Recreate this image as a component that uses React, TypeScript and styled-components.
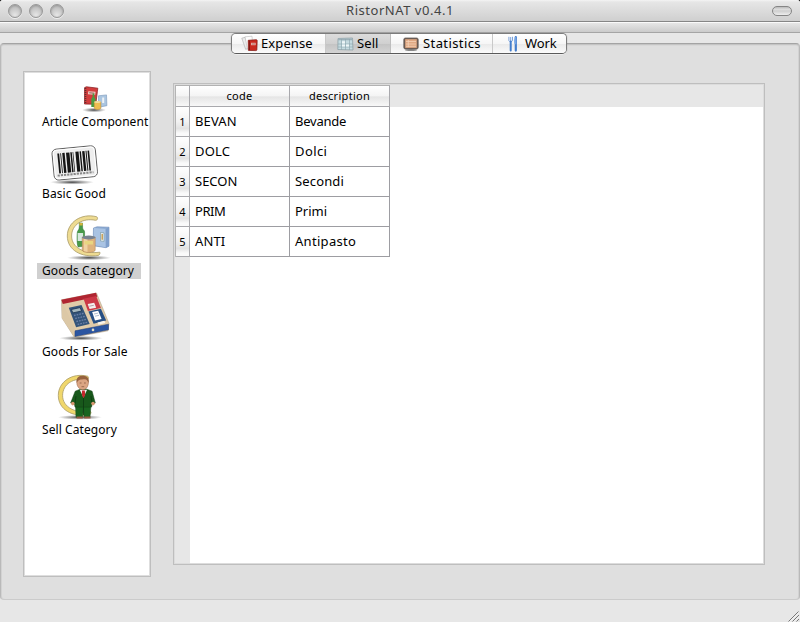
import React from "react";
import styled, { createGlobalStyle } from "styled-components";

const Global = createGlobalStyle`
  * { box-sizing: border-box; }
  html, body { margin: 0; padding: 0; background: #000; }
  body { overflow: hidden; font-family: "Noto Sans", "Open Sans", sans-serif; color: #000; }
`;

const Window = styled.div`
  width: 800px;
  height: 622px;
  display: flex;
  flex-direction: column;
  background: #e7e7e7;
  border-radius: 3px 3px 0 0;
  overflow: hidden;
`;

const TitleBar = styled.header`
  height: 22px;
  flex: none;
  display: grid;
  grid-template-columns: 100px 1fr 100px;
  align-items: center;
  background: linear-gradient(#f4f4f4 0, #e6e6e6 2px, #cfcfcf 21px);
  border-bottom: 1px solid #868686;
`;

const Lights = styled.div`
  display: flex;
  gap: 7px;
  padding-left: 8px;
`;

const Light = styled.span`
  width: 14px;
  height: 14px;
  border-radius: 50%;
  border: 1px solid #989898;
  background: radial-gradient(circle at 50% 85%, #e6e6e6 0, #cacaca 50%, #b4b4b4 100%);
  box-shadow: inset 0 1px 2px #999, 0 1px 0 #eee;
`;

const Title = styled.h1<{ $ls: number }>`
  margin: 0;
  text-align: center;
  font-size: 13px;
  line-height: 20px;
  font-weight: 400;
  color: #444;
  letter-spacing: ${(p) => p.$ls}px;
  padding-bottom: 1px;
`;

const Pill = styled.span`
  justify-self: end;
  width: 20px;
  height: 10px;
  margin-right: 8px;
  border: 1px solid #858585;
  border-radius: 5px;
  background: linear-gradient(#bbb, #ddd 30%, #cfcfcf 50%, #eee);
`;

const ToolStrip = styled.div`
  height: 11px;
  flex: none;
  border-top: 1px solid #fafafa;
  border-bottom: 1px solid #a5a5a5;
  background: linear-gradient(#e6e6e6, #cbcbcb);
`;

const Body = styled.main`
  height: 567px;
  flex: none;
  padding-top: 10px;
`;

const Pane = styled.section`
  height: 557px;
  display: flex;
  flex-direction: column;
  border: 1px solid #b9b9b9;
  border-top: 1px solid #a4a4a4;
  border-bottom: 1px solid #cbcbcb;
  border-radius: 4px;
  background: #dfdfdf;
  box-shadow: inset 0 1px 0 #c4c4c4, inset 0 2px 0 #d8d8d8, inset 1px 0 0 #d2d2d2, inset -1px 0 0 #d2d2d2;
`;

const TabBar = styled.nav`
  width: 336px;
  height: 21px;
  flex: none;
  margin: -11px 0 0 230px;
  display: grid;
  grid-template-columns: 94px 65px 102px 73px;
  border: 1px solid #7c7c7c;
  border-bottom-color: #5a5a5a;
  border-radius: 5px;
  overflow: hidden;
  box-shadow: 0 1px 0 #eee, 0 0 1px #777;
`;

const Tab = styled.button<{ $active?: boolean; $pad: number; $gap: number; $ls: number }>`
  border: 0;
  border-right: 1px solid ${(p) => (p.$active ? "#bdbdbd" : "#c9c9c9")};
  padding: 0 0 0 ${(p) => p.$pad}px;
  display: flex;
  align-items: center;
  gap: ${(p) => p.$gap}px;
  font-family: inherit;
  font-size: 13px;
  line-height: 19px;
  color: #000;
  white-space: nowrap;
  letter-spacing: ${(p) => p.$ls}px;
  background: ${(p) =>
    p.$active
      ? "linear-gradient(#dcdcdc, #d0d0d0 50%, #c3c3c3 51%, #d4d4d4)"
      : "linear-gradient(#fff, #f6f6f6 50%, #e9e9e9 51%, #fbfbfb)"};
  &:last-child { border-right: 0; }
  svg { flex: none; display: block; }
`;

const Columns = styled.div`
  display: flex;
  align-items: flex-start;
  gap: 22px;
  padding: 17px 0 0 22px;
`;

const Sidebar = styled.aside`
  width: 128px;
  height: 506px;
  border: 1px solid #bebebe;
  box-shadow: inset 0 0 0 1px #dedede;
  background: #fff;
  padding: 1px 1px 0 13px;
`;

const Item = styled.div`
  display: flex;
  flex-direction: column;
  align-items: flex-start;
  svg { display: block; }
`;

const ItemLabel = styled.span<{ $selected?: boolean; $ls: number }>`
  height: 16px;
  min-width: ${(p) => (p.$selected ? 104 : 0)}px;
  padding-left: 5px;
  font-size: 12px;
  line-height: 15px;
  white-space: nowrap;
  letter-spacing: ${(p) => p.$ls}px;
  background: ${(p) => (p.$selected ? "#d0d0d0" : "transparent")};
`;

const TableFrame = styled.div`
  width: 592px;
  height: 482px;
  margin-top: 12px;
  border: 1px solid #bebebe;
  box-shadow: inset 0 0 0 1px #dcdcdc;
  padding: 1px;
`;

const TableView = styled.div`
  height: 478px;
  background: linear-gradient(#e7e7e7, #e7e7e7) 0 0 / 100% 22px no-repeat,
    linear-gradient(#e7e7e7, #e7e7e7) 0 0 / 15px 100% no-repeat, #fff;
`;

const Table = styled.div`
  width: 215px;
  display: grid;
  grid-template-columns: 14px 100px 100px;
  grid-template-rows: 22px;
  grid-auto-rows: 30px;
  border-left: 1px solid #b4b4b4;
`;

const HeadCell = styled.div<{ $ls?: number }>`
  border-right: 1px solid #a9a9ad;
  border-bottom: 1px solid #a9a9ad;
  border-top: 1px solid #b2b2b2;
  background: linear-gradient(#fff, #f4f4f4 50%, #e5e5e5 54%, #f8f8f8);
  text-align: center;
  font-size: 11px;
  line-height: 20px;
  letter-spacing: ${(p) => p.$ls ?? 0}px;
`;

const RowHead = styled.div`
  border-right: 1px solid #a9a9ad;
  border-bottom: 1px solid #a9a9ad;
  background: linear-gradient(#fff, #f2f2f2 50%, #e2e2e2 74%, #fafafa 90%);
  text-align: center;
  font-size: 11px;
  line-height: 29px;
`;

const Cell = styled.div<{ $ls: number }>`
  border-right: 1px solid #9d9da2;
  border-bottom: 1px solid #9d9da2;
  background: #fff;
  padding-left: 5px;
  font-size: 13px;
  line-height: 28px;
  letter-spacing: ${(p) => p.$ls}px;
`;

const StatusBar = styled.footer`
  flex: 1;
  display: flex;
  justify-content: flex-end;
  align-items: flex-end;
  svg { display: block; }
`;

const ExpenseIcon = () => (
  <svg width="17" height="17" viewBox="0 0 17 17">
    <path d="M.8 3.2L4 2.3l4 10.5-3.3 1.6z" fill="#ececec" stroke="#aaa" strokeWidth=".6" />
    <path d="M4 1.8l7-.6 1 12-5.5 1z" fill="#fdfdfd" stroke="#bbb" strokeWidth=".6" />
    <path d="M7.2 5.3l8-.6c.6 0 1 .3 1 .9l-.3 9c0 .6-.4 1-1 1l-7.5-.2z" fill="#c9281e" stroke="#7c1814" strokeWidth=".7" />
    <path d="M8.3 5.5l.2 9.6" stroke="#7d1813" strokeWidth="1" />
    <rect x="10" y="7.8" width="4.6" height="2.4" fill="#f2c4bc" />
    <path d="M10.5 9h3.6" stroke="#8d3029" strokeWidth=".7" />
  </svg>
);

const SellIcon = () => (
  <svg width="17" height="14" viewBox="0 0 17 14">
    <path d="M1 1.5l14.5-.5L16 13 .8 12.5z" fill="#c5dbe0" stroke="#8fa2a8" strokeWidth=".8" />
    <path d="M1 1.5h14.8v1.8H1z" fill="#9db0b8" />
    <path d="M1 7h15M1 10h15M4.5 2v11M8.5 2v11M12.5 2v11" stroke="#8ba5ad" strokeWidth=".6" />
    <path d="M5 4.3h3v2.3H5zM9 7.5h3v2H9zM5 7.5h3v2H5z" fill="#eef6f7" />
  </svg>
);

const StatsIcon = () => (
  <svg width="16" height="14" viewBox="0 0 16 14">
    <ellipse cx="8" cy="13" rx="6" ry="1" fill="#888" />
    <rect x=".8" y="1" width="14.4" height="11" rx="1.5" fill="#6a5950" stroke="#6b625d" strokeWidth=".8" />
    <rect x="2.2" y="2.2" width="11.6" height="8.7" fill="#dfa883" />
    <path d="M3 4.5h10M3 7h10M3 9.3h10M5.3 3v7" stroke="#f4d2b6" strokeWidth=".8" />
  </svg>
);

const WorkIcon = () => (
  <svg width="10" height="16" viewBox="0 0 10 16">
    <path d="M.9.8v4c0 1 3.6 1 3.6 0v-4M2.7 1v4" fill="none" stroke="#7da4dc" strokeWidth="1" />
    <path d="M2.7 5.5v9" stroke="#437dcc" strokeWidth="2" strokeLinecap="round" />
    <path d="M7.8 1.2v13.4" stroke="#437dcc" strokeWidth="2.2" strokeLinecap="round" />
    <path d="M7.2 1c-1.3 2-1.2 5-.6 7l1.7.4V1z" fill="#75a5e5" />
  </svg>
);

const Shadow = ({ cx, cy, rx }: { cx: number; cy: number; rx: number }) => (
  <>
    <defs>
      <radialGradient id={`shade${cy}`}>
        <stop offset="0" stopColor="#222" stopOpacity=".85" />
        <stop offset="1" stopColor="#555" stopOpacity="0" />
      </radialGradient>
    </defs>
    <ellipse cx={cx} cy={cy} rx={rx} ry="2.4" fill={`url(#shade${cy})`} />
  </>
);

const Groceries = () => (
  <>
    <path d="M93.5 228l3.5-1.2 12 .4v19l-3 1.5-13-2z" fill="#8fadd4" stroke="#6f8dbb" strokeWidth=".6" />
    <path d="M94 228l11.7 1v18.3L93.6 245z" fill="#a9c3e3" />
    <path d="M105.7 229l3.2-1.8v18.7l-3 1.6z" fill="#7f9fcb" />
    <path d="M100.5 232.5l3.5.4v8.5l-3.5-.5z" fill="#e8edf2" stroke="#688" strokeWidth=".5" />
    <path d="M102.2 234v5.8" stroke="#c49a4b" strokeWidth="1.4" />
    <path d="M79.3 223h3.2l.1 5c.2 2 2 2 2 4v14l-6.5 1c-1.6-4-1.2-15-.4-16 1.5-1.7 1.7-3 1.6-8z" fill="#479a48" stroke="#2d6e31" strokeWidth=".5" />
    <path d="M79.3 223h3.3v2.5h-3.3z" fill="#d3b43d" />
    <path d="M77.6 233h5.5v8h-5.5z" fill="#d8e8de" />
    <path d="M82.2 237v13c0 3.3 13 3.3 13 0v-13z" fill="#dfb37c" stroke="#a77c54" strokeWidth=".5" />
    <path d="M84 239h3.5v13l-3.5-1z" fill="#f0d2a3" />
    <ellipse cx="88.7" cy="237.5" rx="6.7" ry="1.9" fill="#788290" />
    <path d="M84.5 241h8.5v3.5h-8.5z" fill="#e9d681" />
  </>
);

const ArticleArt = () => (
  <svg width="112" height="41" viewBox="37 73 112 41">
    <Shadow cx={94} cy={110} rx={12} />
    <path d="M84.6 87.6l1.8-.8 11.4 1.4-.4 3-1.6 13-11.3-.2z" fill="#d23c3c" stroke="#8d2427" strokeWidth=".8" />
    <path d="M85.5 88v16" stroke="#5d3030" strokeWidth="1.6" strokeDasharray="1 1" />
    <path d="M88.3 91.2l7.2.6-.3 3-7.2-.5z" fill="#f1d5cc" />
    <path d="M89.2 92.8l5.2.4" stroke="#8f4541" strokeWidth=".9" />
    <path d="M98.5 95.8l8-.9.4 10.8-8.4 1.6z" fill="#aac5e0" stroke="#7796b8" strokeWidth=".6" />
    <path d="M102.2 97.5h2v5.5h-2z" fill="#eef2f4" />
    <path d="M92.6 93.5h1.7v3.5l1.2 2v8h-4.2v-8l1.3-2z" fill="#4a9c42" />
    <path d="M94.2 102v6.2c1.5 1.7 5.4 1.7 6.7 0V102z" fill="#eebd50" stroke="#b68838" strokeWidth=".5" />
    <ellipse cx="97.5" cy="102" rx="3.3" ry="1.1" fill="#f3dd9c" />
  </svg>
);

const bars: [number, number][] = [
  [58.3, 1.8], [61.2, 0.8], [63.2, 2.4], [67, 3.4], [71.3, 1.5], [73.6, 0.7],
  [76.4, 3.2], [80.6, 1.4], [83.2, 2.4], [86.6, 1], [88.6, 1.6],
];

const BarcodeArt = () => (
  <svg width="112" height="56" viewBox="37 130 112 56">
    <Shadow cx={72} cy={182.2} rx={22} />
    <g transform="rotate(-5.5 74 163)">
      <rect x="53" y="147.5" width="43.5" height="31" rx="4.5" fill="#eee" stroke="#555" strokeWidth=".9" />
      <rect x="54.2" y="148.7" width="41" height="28.5" rx="3.5" fill="none" stroke="#fff" strokeWidth="1" />
      {bars.map(([x, w]) => (
        <rect key={x} x={x} y="152" width={w} height="20" fill="#151515" />
      ))}
      <path d="M56.5 174h36" stroke="#888" strokeWidth="2" strokeDasharray="2.2 1" />
    </g>
  </svg>
);

const Crescent = ({ dx, dy, fill }: { dx: number; dy: number; fill: string }) => (
  <path
    transform={`translate(${dx} ${dy})`}
    d="M96.5 217.2c-15.5-3.8-29.2 5.8-29.2 19.3 0 13.8 13.7 22 31.2 19.4.9-.2 2-2.6 1.3-3.2-15.2 2-28.2-4.4-28.2-16.2 0-11.3 11-18.4 24-15.7 1.8.3 2.8-2.9.9-3.6z"
    fill={fill}
    stroke="#a99c6a"
    strokeWidth=".8"
  />
);

const GoodsCategoryArt = () => (
  <svg width="112" height="61" viewBox="37 202 112 61">
    <Shadow cx={89} cy={257.8} rx={22} />
    <Crescent dx={0} dy={-.5} fill="#eedb91" />
    <Groceries />
  </svg>
);

const RegisterArt = () => (
  <svg width="112" height="65" viewBox="37 279 112 65">
    <Shadow cx={81} cy={338.2} rx={22} />
    <path d="M61.5 299.8l35-6.8 12.5 30.5-1 7.3-33.7 6.4L62 318z" fill="#e0cba9" stroke="#ad9b7f" strokeWidth=".5" />
    <path d="M62 301.5l12.5 26v9.3L62 318z" fill="#dcc8a6" />
    <path d="M61.3 299.8l34.7-7 1.3 4-34.5 7.2z" fill="#af2531" />
    <path d="M83.5 298.7l12.7-2.7 4.7 12-13 2.9z" fill="#cb3846" />
    <path d="M87.7 304l6.5-1.2 2 5-6.6 1.3z" fill="#f3eeee" />
    <path d="M89.3 306.2l4.5-.9" stroke="#9b7780" strokeWidth=".7" />
    <path d="M88.4 311.5l12.5-2.8 5.3 11.8-12.6 3.2z" fill="#285085" />
    <path d="M92.2 312l6-1.2 3.4 8.2-6.6 1.6z" fill="#fff" />
    <path d="M94 314l4-.9M95 316.2l4-.9" stroke="#8ba0bc" strokeWidth=".7" />
    <path d="M68.8 307.7l12.7-2.8 8.2 19-13.6 3.4z" fill="#34547a" />
    <path d="M71.3 309.5l8.8-1.9 1.5 3.4-8.7 1.9z" fill="#a4b6bd" stroke="#17304e" strokeWidth=".8" />
    <path d="M74 315.5l10-2.2M75.2 318.5l10-2.2M76.4 321.5l10-2.2M77.6 324.4l10-2.2" stroke="#6c80a8" strokeWidth="1.3" strokeDasharray="1.7 1" />
    <path d="M97.5 322.6l6.8-1.8 1 2.2-6.8 1.8z" fill="#f8f4ec" />
    <path d="M75 330.8l33.5-6.6v5.6l-33.6 6.8z" fill="#2b55a1" stroke="#203e79" strokeWidth=".5" />
    <circle cx="93" cy="329.9" r="1.3" fill="#e3ddc6" />
  </svg>
);

const SellCategoryArt = () => (
  <svg width="112" height="62" viewBox="37 360 112 62">
    <Shadow cx={80} cy={417.3} rx={22} />
    <Crescent dx={-9} dy={159} fill="#f0d76c" />
    <path d="M75.5 405h15.5l-1 12.3h-5.9l-.7-9-.8 9H76z" fill="#19651f" stroke="#174b1c" strokeWidth=".5" />
    <path d="M75.2 391.2l5.5-2.2h5.6l5.8 2.2 3.2 11.8-3.2 1.6-.6 2.5h-16.5l-.5-2.5-3.9-1.6z" fill="#18581b" stroke="#103d14" strokeWidth=".5" />
    <path d="M76 396l-1 8M91 396l1 8" stroke="#0d3a12" strokeWidth=".8" />
    <path d="M79.7 389.7h7.4l-3.6 7.8z" fill="#f5eeee" />
    <path d="M82.1 390.5h2.7l.4 4.5-1.7 3.2-1.6-3.2z" fill="#c7272d" />
    <path d="M83.5 398v17" stroke="#0c3812" strokeWidth=".8" />
    <path d="M77 384.5c-.9-5.8 2.3-7.8 5.7-7.8 4.6 0 6.5 3 5.5 7.8-.6 3.2-2.8 5.2-5.4 5.2s-5-2-5.8-5.2z" fill="#dba583" stroke="#986244" strokeWidth=".5" />
    <path d="M76.7 383c-1-5.8 2.4-7.3 6-7.3 4.4 0 6.8 2.3 5.8 7.3-1.2-2.5-1.4-3.5-4.3-3.7-3 .2-5.9-.1-7.5 3.7z" fill="#96623e" />
    <path d="M79.7 383h1.8M84 383h1.8M81.5 386.7h2.7" stroke="#8a5a45" strokeWidth=".8" />
    <circle cx="72.8" cy="403.6" r="1.8" fill="#d69770" />
    <circle cx="93" cy="403.6" r="1.8" fill="#d69770" />
    <path d="M76.5 416.5h6.3v2h-6.3zM84.2 416.5h6.3v2h-6.3z" fill="#95593f" />
  </svg>
);

const items = [
  { label: "Article Component", Art: ArticleArt, ls: 0.05 },
  { label: "Basic Good", Art: BarcodeArt, ls: 0.1 },
  { label: "Goods Category", Art: GoodsCategoryArt, ls: 0.1, selected: true },
  { label: "Goods For Sale", Art: RegisterArt, ls: 0.1 },
  { label: "Sell Category", Art: SellCategoryArt, ls: 0.08 },
];

const rows = [
  { code: "BEVAN", name: "Bevande", codeLs: 0.1, nameLs: -0.25 },
  { code: "DOLC", name: "Dolci", codeLs: 0.15, nameLs: 0.4 },
  { code: "SECON", name: "Secondi", codeLs: 0, nameLs: 0.15 },
  { code: "PRIM", name: "Primi", codeLs: -0.45, nameLs: 0 },
  { code: "ANTI", name: "Antipasto", codeLs: 0.1, nameLs: 0.3 },
];

export default function App() {
  return (
    <>
      <Global />
      <Window>
        <TitleBar>
          <Lights>
            <Light />
            <Light />
            <Light />
          </Lights>
          <Title $ls={0.53}>RistorNAT v0.4.1</Title>
          <Pill />
        </TitleBar>
        <ToolStrip />
        <Body>
          <Pane>
            <TabBar>
              <Tab $pad={9} $gap={3} $ls={0.1}><ExpenseIcon />Expense</Tab>
              <Tab $active $pad={11} $gap={3} $ls={0.1}><SellIcon />Sell</Tab>
              <Tab $pad={12} $gap={4} $ls={0.4}><StatsIcon />Statistics</Tab>
              <Tab $pad={15} $gap={7} $ls={-0.1}><WorkIcon />Work</Tab>
            </TabBar>
            <Columns>
              <Sidebar>
                {items.map(({ label, Art, ls, selected }) => (
                  <Item key={label}>
                    <Art />
                    <ItemLabel $ls={ls} $selected={selected}>{label}</ItemLabel>
                  </Item>
                ))}
              </Sidebar>
              <TableFrame>
                <TableView>
                  <Table>
                    <HeadCell />
                    <HeadCell $ls={0.3}>code</HeadCell>
                    <HeadCell $ls={0.3}>description</HeadCell>
                    {rows.map((r, i) => (
                      <React.Fragment key={r.code}>
                        <RowHead>{i + 1}</RowHead>
                        <Cell $ls={r.codeLs}>{r.code}</Cell>
                        <Cell $ls={r.nameLs}>{r.name}</Cell>
                      </React.Fragment>
                    ))}
                  </Table>
                </TableView>
              </TableFrame>
            </Columns>
          </Pane>
        </Body>
        <StatusBar>
          <svg width="13" height="13" viewBox="0 0 13 13">
            <path d="M1.5 12.5l10-10M5.5 12.5l6.5-6.5M9.5 12.5l2.5-2.5" stroke="#777" strokeWidth="1" />
            <path d="M2.5 12.8L12 3.5M6.5 12.8L12.5 7" stroke="#fafafa" strokeWidth=".7" />
          </svg>
        </StatusBar>
      </Window>
    </>
  );
}
